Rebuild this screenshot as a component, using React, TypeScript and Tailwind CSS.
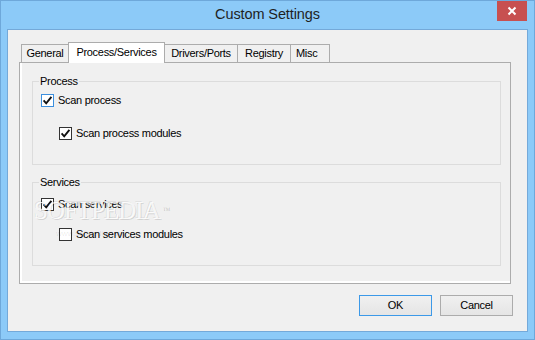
import React from "react";

function CheckBox({ checked, focused }: { checked: boolean; focused?: boolean }) {
  return (
    <div
      className={`w-[13px] h-[13px] shrink-0 bg-white border flex items-center justify-center ${
        focused ? "border-[#3c8fde]" : "border-[#333333]"
      }`}
    >
      {checked && (
        <svg width="11" height="11" viewBox="0 0 11 11">
          <path d="M1.6 5.4 L4.2 8.3 L9.4 1.9" fill="none" stroke="#111" strokeWidth="1.9" />
        </svg>
      )}
    </div>
  );
}

function Row({ checked, focused, label, className }: { checked: boolean; focused?: boolean; label: string; className: string }) {
  return (
    <div className={`flex items-center h-[13px] gap-[4px] ${className}`}>
      <CheckBox checked={checked} focused={focused} />
      <span className="text-[11px] tracking-[-0.3px] leading-[13px] text-black whitespace-nowrap">{label}</span>
    </div>
  );
}

export default function App() {
  return (
    <div className="relative w-[535px] h-[340px] bg-[#8ccaf8] border border-[#6ea8da] flex flex-col font-['Liberation_Sans','Noto_Sans',sans-serif] overflow-hidden">
      {/* Title bar */}
      <div className="relative h-[28px] shrink-0 flex items-center justify-center">
        <span className="text-[14.5px] tracking-[-0.1px] text-[#1f1f1f] -mt-[1px]">Custom Settings</span>
        <div className="absolute right-[7px] -top-[1px] w-[30px] h-[21px] bg-[#c75050] flex items-center justify-center">
          <svg width="10" height="10" viewBox="0 0 10 10">
            <path d="M1.5 1.5 L8.5 8.5 M8.5 1.5 L1.5 8.5" stroke="#ffffff" strokeWidth="2" />
          </svg>
        </div>
      </div>

      {/* Client area */}
      <div className="flex-1 mx-[6px] mb-[7px] bg-[#f0f0f0] border border-[#74a9d9] pt-[12px] pl-[11px] pr-[17px] flex flex-col">
        {/* Tabs */}
        <div className="flex h-[21px] -mb-px ml-[2px] text-[11px] tracking-[-0.3px] text-black">
          <div className="self-start mt-[2px] h-[18px] w-[48px] border border-b-0 border-[#acacac] bg-[#f0f0f0] flex items-center justify-center">
            General
          </div>
          <div className="relative z-10 -ml-px h-[21px] w-[97px] border border-b-0 border-[#acacac] bg-white flex items-center justify-center pb-[2px]">
            Process/Services
          </div>
          <div className="self-start mt-[2px] -ml-px h-[18px] w-[74px] border border-b-0 border-[#acacac] bg-[#f0f0f0] flex items-center justify-center">
            Drivers/Ports
          </div>
          <div className="self-start mt-[2px] -ml-px h-[18px] w-[54px] border border-b-0 border-[#acacac] bg-[#f0f0f0] flex items-center justify-center">
            Registry
          </div>
          <div className="self-start mt-[2px] -ml-px h-[18px] w-[40px] border border-b-0 border-[#acacac] bg-[#f0f0f0] flex items-center justify-start pl-[5px]">
            Misc
          </div>
        </div>

        {/* Panel */}
        <div className="w-[492px] h-[222px] border border-[#acacac] bg-[#f0f0f0] shadow-[inset_2px_-2px_0_#ffffff] pl-[12px] pr-[9px] pt-[10px] flex flex-col">
          <fieldset className="h-[92px] border border-[#dcdcdc] px-0 m-0">
            <legend className="ml-[6px] px-[1px] text-[11px] tracking-[-0.3px] leading-[16px] text-black">Process</legend>
            <Row checked focused label="Scan process" className="mt-[5px] ml-[8px]" />
            <Row checked label="Scan process modules" className="mt-[20px] ml-[26px]" />
          </fieldset>
          <fieldset className="mt-[9px] h-[92px] border border-[#dcdcdc] px-0 m-0">
            <legend className="ml-[6px] px-[1px] text-[11px] tracking-[-0.3px] leading-[16px] text-black">Services</legend>
            <Row checked label="Scan services" className="mt-[8px] ml-[8px]" />
            <Row checked={false} label="Scan services modules" className="mt-[17px] ml-[26px]" />
          </fieldset>
        </div>

        {/* Buttons */}
        <div className="mt-[11px] -mr-[3px] flex justify-end gap-[8px] text-[11px] tracking-[-0.3px] text-black">
          <button className="w-[73px] h-[21px] border border-[#3c99e8] bg-gradient-to-b from-[#f0f0f0] to-[#e5e5e5] flex items-center justify-center">
            OK
          </button>
          <button className="w-[73px] h-[21px] border border-[#acacac] bg-gradient-to-b from-[#f0f0f0] to-[#e5e5e5] flex items-center justify-center">
            Cancel
          </button>
        </div>
      </div>

      {/* Watermark */}
      <div className="absolute left-[33px] top-[197px] pointer-events-none select-none font-['Liberation_Serif',serif] text-[25px] leading-[25px] tracking-[-1px] text-white/80 [text-shadow:1px_1px_0_rgba(0,0,0,0.12),-1px_-1px_0_rgba(0,0,0,0.08)]">
        SOFTPEDIA<span className="text-[8px] align-top ml-[3px] text-black/20 [text-shadow:none]">™</span>
      </div>
      <div className="absolute left-[55px] top-[229px] pointer-events-none select-none text-[8px] leading-[8px] text-black/10">
        www.softpedia.com
      </div>
    </div>
  );
}
